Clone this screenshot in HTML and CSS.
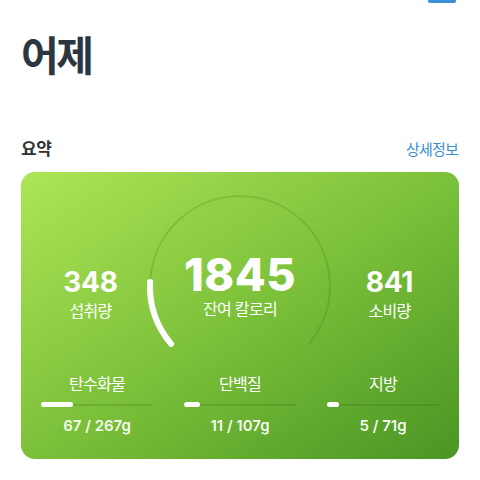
FILE: index.html
```html
<!DOCTYPE html>
<html lang="ko">
<head>
<meta charset="utf-8">
<link rel="stylesheet" href="styles.css">
</head>
<body>
<div class="page">
  <div class="topbar"><span class="top-btn"></span></div>
  <h1 class="title">어제</h1>
  <div class="section-head">
    <span class="section-title">요약</span>
    <a class="more">상세정보</a>
  </div>
  <div class="card">
    <div class="stats">
      <div class="stat side">
        <div class="num">348</div>
        <div class="lbl">섭취량</div>
      </div>
      <div class="stat center">
        <svg class="ring" viewBox="0 0 200 160" width="200" height="160">
          <path class="track" d="M 31.06 150.85 A 90 90 0 1 1 168.94 150.85" />
          <path class="prog" d="M 31.06 150.85 A 90 90 0 0 1 10.09 89.08" />
        </svg>
        <div class="big">1845</div>
        <div class="lbl">잔여 칼로리</div>
      </div>
      <div class="stat side">
        <div class="num">841</div>
        <div class="lbl">소비량</div>
      </div>
    </div>
    <div class="macros">
      <div class="macro">
        <div class="lbl">탄수화물</div>
        <div class="bar"><span class="fill" style="width:32px"></span></div>
        <div class="val">67 / 267g</div>
      </div>
      <div class="macro">
        <div class="lbl">단백질</div>
        <div class="bar"><span class="fill" style="width:16px"></span></div>
        <div class="val">11 / 107g</div>
      </div>
      <div class="macro">
        <div class="lbl">지방</div>
        <div class="bar"><span class="fill" style="width:12px"></span></div>
        <div class="val">5 / 71g</div>
      </div>
    </div>
  </div>
</div>
</body>
</html>
```
FILE: styles.css
```css
* { box-sizing: border-box; }
html, body { margin: 0; padding: 0; background: #fff; }
body {
  font-family: "Noto Sans CJK KR", "Noto Sans", sans-serif;
  color: #2b3641;
}
.page { padding: 0 21px; }
.topbar {
  display: flex;
  justify-content: flex-end;
  height: 3px;
  padding-right: 3px;
}
.top-btn {
  width: 28px;
  height: 3px;
  background: #3a8fd6;
  border-radius: 0 0 2px 2px;
}
.title {
  margin: 26px 0 0;
  font-size: 41px;
  font-weight: 700;
  line-height: 48px;
  letter-spacing: -2.5px;
  color: #2b3641;
}
.section-head {
  display: flex;
  justify-content: space-between;
  align-items: baseline;
  margin-top: 58px;
  height: 26px;
}
.section-title {
  font-size: 17px;
  font-weight: 700;
  line-height: 26px;
  color: #2f3337;
  letter-spacing: -0.5px;
}
.more {
  font-size: 15px;
  line-height: 26px;
  color: #3a8fcf;
  letter-spacing: -0.8px;
  padding-right: 1px;
}
.card {
  margin-top: 11px;
  height: 287px;
  border-radius: 14px;
  background: linear-gradient(to bottom right, #ade556 0%, #7cc13a 50%, #4a9524 100%);
  padding: 0 20px;
  color: #fff;
}
.stats {
  display: grid;
  grid-template-columns: 1fr 200px 1fr;
  align-items: end;
  height: 148px;
}
.stat {
  display: flex;
  flex-direction: column;
  align-items: center;
}
.side .lbl { margin-top: 2px; }
.stat.center {
  position: relative;
  height: 148px;
  padding-bottom: 2px;
  justify-content: flex-end;
}
.ring {
  position: absolute;
  top: 21px;
  left: 0;
  overflow: visible;
}
.track {
  fill: none;
  stroke: rgba(40, 90, 10, 0.17);
  stroke-width: 2;
}
.prog {
  fill: none;
  stroke: #fff;
  stroke-width: 6;
  stroke-linecap: round;
}
.num {
  font-family: Inter, "Noto Sans", sans-serif;
  font-size: 28px;
  font-weight: 700;
  line-height: 32px;
  letter-spacing: -0.3px;
}
.big {
  position: relative;
  font-family: Inter, "Noto Sans", sans-serif;
  font-size: 45px;
  font-weight: 800;
  line-height: 46px;
  letter-spacing: 0.5px;
}
.lbl {
  position: relative;
  font-size: 16px;
  line-height: 20px;
  letter-spacing: -0.7px;
}
.macros {
  display: grid;
  grid-template-columns: repeat(3, 1fr);
  column-gap: 31px;
  margin-top: 53px;
}
.macro {
  display: flex;
  flex-direction: column;
  align-items: center;
}
.bar {
  position: relative;
  align-self: stretch;
  height: 5px;
  margin-top: 9px;
  display: flex;
  align-items: center;
}
.bar::before {
  content: "";
  position: absolute;
  left: 0;
  right: 0;
  top: 2px;
  height: 2px;
  background: rgba(40, 90, 10, 0.18);
}
.fill {
  position: relative;
  height: 5px;
  border-radius: 3px;
  background: #fff;
}
.val {
  margin-top: 9px;
  font-family: Inter, "Noto Sans", sans-serif;
  font-size: 15px;
  font-weight: 600;
  line-height: 20px;
  color: rgba(255, 255, 255, 0.95);
}
```
